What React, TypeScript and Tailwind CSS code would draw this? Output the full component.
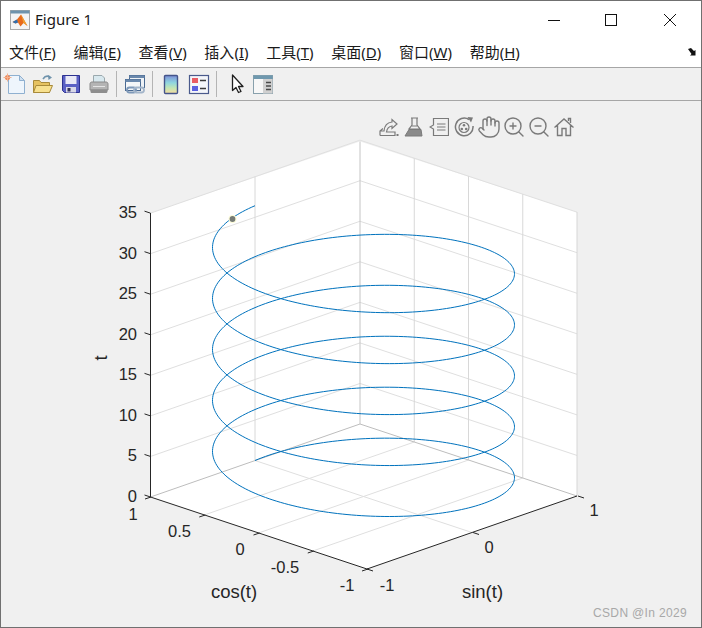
import React from "react";
import { Hand, ZoomIn, ZoomOut } from "lucide-react";

const X = (x: number, y: number) => 363.5 + 105 * x - 108.5 * y;
const Y = (x: number, y: number, z: number) => 496.5 - 36.5 * x - 36 * y - 8.11 * z;

function helix() {
  const pts: string[] = [];
  const end = 10 * Math.PI;
  for (let i = 0; i <= 1000; i++) {
    const t = (end * i) / 1000;
    const a = Math.sin(t);
    const b = Math.cos(t);
    pts.push(`${X(a, b).toFixed(2)},${Y(a, b, t).toFixed(2)}`);
  }
  return "M" + pts.join("L");
}

const zTicks = [0, 5, 10, 15, 20, 25, 30, 35];

const menus: [string, string][] = [
  ["文件", "F"],
  ["编辑", "E"],
  ["查看", "V"],
  ["插入", "I"],
  ["工具", "T"],
  ["桌面", "D"],
  ["窗口", "W"],
  ["帮助", "H"],
];

const Sep = ({ cls }: { cls: string }) => <div className={`w-px h-[26px] bg-[#b4b4b4] ${cls}`} />;

const icon = "w-6 h-6 shrink-0";

function Toolbar() {
  return (
    <div className="h-[32px] bg-[#f0f0f0] flex items-center pl-[2px] shrink-0">
      <svg viewBox="0 0 24 24" className={icon}>
        <path d="M5.5 3.5H16.5L21.5 8.5V21.5H5.5Z" fill="#eef5fc" stroke="#8fb0d0" />
        <path d="M16.5 3.5V8.5H21.5Z" fill="#cfe0f0" stroke="#8fb0d0" />
        <circle cx="4.5" cy="5.5" r="2.6" fill="#ee8a5c" />
        <path d="M4.5 1.5V9.5M0.5 5.5H8.5" stroke="#f3b08e" />
      </svg>
      <svg viewBox="0 0 24 24" className={`${icon} ml-1`}>
        <path d="M2.5 20.5V8.5H8.5L10 10.5H18.5V20.5Z" fill="#e6c260" stroke="#a88a3a" />
        <path d="M2.5 20.5L5 13.5H21.5L18.5 20.5Z" fill="#f7e08e" stroke="#a88a3a" />
        <path d="M12 7C14 4 16.5 3.5 19 5" fill="none" stroke="#6f93ac" strokeWidth="1.6" />
        <path d="M17 3L21 5.5L17.5 8Z" fill="#6f93ac" />
      </svg>
      <svg viewBox="0 0 24 24" className={`${icon} ml-1`}>
        <path d="M3.5 3.5H20.5V20.5H5.5L3.5 18.5Z" fill="#5a60c4" stroke="#2c3190" />
        <rect x="6.5" y="4" width="11" height="8" fill="#e9e9f6" />
        <rect x="7" y="15" width="10" height="5.5" fill="#d8d8e8" />
        <rect x="8.5" y="16" width="3" height="3.5" fill="#33335a" />
      </svg>
      <svg viewBox="0 0 24 24" className={`${icon} ml-1`}>
        <path d="M6.5 3.5H15L17.5 6V11H6.5Z" fill="#d8e8ee" stroke="#9aa8ad" />
        <path d="M3 12C3 10.5 4 10 5 10H19C20.5 10 21 11 21 12V18H3Z" fill="#b4b4b4" stroke="#8a8a8a" />
        <path d="M3.5 17.5H20.5V19.5C20.5 20.5 19.5 21 19 21H5C4 21 3.5 20.5 3.5 19.5Z" fill="#8e8e8e" />
        <path d="M6 14.5H18" stroke="#e4e4e4" />
      </svg>
      <Sep cls="ml-[5px]" />
      <svg viewBox="0 0 24 24" className={`${icon} ml-[6px]`}>
        <rect x="6.5" y="3.5" width="15" height="12" fill="#eef2f6" stroke="#4a6a92" />
        <rect x="6.5" y="3.5" width="15" height="2.5" fill="#6a88ac" />
        <rect x="2.5" y="7.5" width="15" height="11" fill="#f4f6f8" stroke="#4a6a92" />
        <rect x="2.5" y="7.5" width="15" height="2.5" fill="#6a88ac" />
        <rect x="4" y="15.5" width="9" height="5" rx="2.5" fill="none" stroke="#7d98b8" strokeWidth="1.8" />
        <rect x="11" y="15.5" width="10" height="5" rx="2.5" fill="none" stroke="#a3b5ca" strokeWidth="1.8" />
      </svg>
      <Sep cls="ml-[5px]" />
      <svg viewBox="0 0 24 24" className={`${icon} ml-[6px]`}>
        <defs>
          <linearGradient id="cbar" x1="0" y1="0" x2="0" y2="1">
            <stop offset="0" stopColor="#7d8fd8" />
            <stop offset="0.4" stopColor="#8fd6e0" />
            <stop offset="0.7" stopColor="#c4e6b4" />
            <stop offset="1" stopColor="#f6dca0" />
          </linearGradient>
        </defs>
        <rect x="5.5" y="3.5" width="13" height="18" rx="1" fill="url(#cbar)" stroke="#44548a" strokeWidth="1.4" />
      </svg>
      <svg viewBox="0 0 24 24" className={`${icon} ml-1`}>
        <rect x="2.5" y="3.5" width="19" height="18" fill="#f4f6fa" stroke="#4a5a8c" strokeWidth="1.2" />
        <rect x="5" y="6" width="6" height="5" fill="#e85c64" />
        <rect x="5" y="14" width="6" height="5" fill="#5a60e0" />
        <path d="M13 8.5H19M13 16.5H19" stroke="#3a3a3a" strokeWidth="1.4" />
      </svg>
      <Sep cls="ml-[5px]" />
      <svg viewBox="0 0 24 24" className={`${icon} ml-[8px]`}>
        <path d="M7.5 3V18.5L11 15.5L13.5 20.5L16 19.5L13.5 14.5H18Z" fill="#ffffff" stroke="#202020" strokeWidth="1.3" strokeLinejoin="round" />
      </svg>
      <svg viewBox="0 0 24 24" className={`${icon} ml-[2px]`}>
        <rect x="2.5" y="3.5" width="19" height="18" fill="#f7f7f7" stroke="#88a0ac" />
        <rect x="2.5" y="3.5" width="19" height="3.5" fill="#6f98ae" />
        <rect x="12" y="7" width="9.5" height="14.5" fill="#d0d0d0" />
        <path d="M15 10.5H20M15 14H20M15 17.5H20" stroke="#4a4a4a" strokeWidth="1.3" />
      </svg>
    </div>
  );
}

function AxesToolbar() {
  const s = { stroke: "#7a7a7a", strokeWidth: 1.2, fill: "none" };
  const cls = "w-5 h-5 mx-[2px] mt-[2px]";
  return (
    <div className="absolute left-[376px] top-[14px] flex gap-px">
      <svg viewBox="0 0 20 20" className={cls}>
        <path {...s} d="M1 18.5V14L4 11.5M1 18.5H16V15H7.5C8 11.5 10 9.5 13 9V11.5L18 7L13 2.5V5C8.5 5.5 5.5 8.5 5 14H1" />
        <rect x="17.5" y="17" width="2" height="2" fill="#7a7a7a" />
      </svg>
      <svg viewBox="0 0 20 20" className={cls}>
        <path {...s} d="M7 1H14M8 1V8L5 12H16L13 8V1" />
        <path d="M5 12.5H17L18 19H1Z" fill="#8a8a8a" stroke="#7a7a7a" />
        <path d="M8 9H13" stroke="#7a7a7a" />
      </svg>
      <svg viewBox="0 0 20 20" className={cls}>
        <path {...s} d="M4.5 1.5H19.5V18.5H4.5V12L1 10L4.5 8Z" />
        <path {...s} d="M8 7H16.5M8 10H16.5M8 13H16.5" />
      </svg>
      <svg viewBox="0 0 20 20" className={cls}>
        <path {...s} strokeWidth={1.5} d="M15 2.5A8.8 8.8 0 1 0 19 9" />
        <path d="M13.5 0L19 0.5L17 5.5Z" fill="#7a7a7a" />
        <circle {...s} cx="10" cy="10.5" r="5" />
        <circle cx="10" cy="8.3" r="1.3" fill="#7a7a7a" />
        <circle cx="7.8" cy="12" r="1.3" fill="#7a7a7a" />
        <circle cx="12.2" cy="12" r="1.3" fill="#7a7a7a" />
      </svg>
      <Hand size={24} strokeWidth={1.4} color="#7a7a7a" />
      <ZoomIn size={24} strokeWidth={1.4} color="#7a7a7a" />
      <ZoomOut size={24} strokeWidth={1.4} color="#7a7a7a" />
      <svg viewBox="0 0 20 20" className={cls}>
        <path {...s} strokeWidth={1.4} d="M0.5 10.5L10 2L19.5 10.5M3.5 8V18.5H8V11.5H12V18.5H16.5V8M14.5 4V1.5H16.5V6" />
      </svg>
    </div>
  );
}

function Chart() {
  const grid = "#dfdfdf";
  const dark = "#262626";
  const tick = { fill: dark, fontSize: 16.5, fontFamily: "'Liberation Sans', Arial, sans-serif" };
  const label = { ...tick, fontSize: 18.5 };
  const line = (x1: number, y1: number, x2: number, y2: number, c: string, k?: string) => (
    <line key={k ?? `${x1}-${y1}-${x2}-${y2}`} x1={x1} y1={y1} x2={x2} y2={y2} stroke={c} strokeWidth={1} />
  );
  const mid = [0.5, 0, -0.5];
  const zr = (z: number) => 8.11 * z;
  return (
    <svg viewBox="1 101 700 526" className="block w-full h-full">
      <path d="M150.5 213L360 141.5L577 212V496L367 569L150.5 497Z" fill="#ffffff" />
      {zTicks.slice(1).map((z) => (
        <g key={z}>
          {line(150.5, 497 - zr(z), 360, 424 - zr(z), grid)}
          {line(360, 424 - zr(z), 577, 496 - zr(z), grid)}
        </g>
      ))}
      {mid.map((y) => line(X(1, y), Y(1, y, 0), X(1, y), Y(1, y, 35), "#d8d8d8"))}
      {line(X(0, 1), Y(0, 1, 0), X(0, 1), Y(0, 1, 35), "#d8d8d8")}
      {mid.map((y) => line(X(-1, y), Y(-1, y, 0), X(1, y), Y(1, y, 0), grid))}
      {line(X(0, -1), Y(0, -1, 0), X(0, 1), Y(0, 1, 0), grid)}
      {line(360, 141.5, 360, 424, "#c4c4c4")}
      {line(577, 212, 577, 496, "#d6d6d6")}
      {line(150.5, 497, 360, 424, "#bdbdbd")}
      {line(360, 424, 577, 496, "#bdbdbd")}
      <path d={helix()} fill="none" stroke="#0072bd" strokeWidth={1} />
      <circle cx="232.5" cy="219" r="4" fill="#fbfbd8" />
      <circle cx="232.5" cy="219" r="2.9" fill="#757a75" />
      {line(150.5, 213, 150.5, 497, dark)}
      {line(150.5, 497, 367, 569, dark)}
      {line(367, 569, 577, 496, dark)}
      {zTicks.map((z) => line(150.5, 497 - zr(z), 144.5, 495 - zr(z), dark))}
      {[1, 0.5, 0, -0.5, -1].map((y) => line(X(-1, y) + 1, Y(-1, y, 0), X(-1, y) - 5, Y(-1, y, 0) + 2, dark))}
      {[0, 1].map((x) => line(X(x, -1) + 1, Y(x, -1, 0), X(x, -1) + 7, Y(x, -1, 0) + 2, dark))}
      {line(367, 569, 373, 571, dark)}
      {zTicks.map((z) => (
        <text key={z} x={137} y={501.5 - 8.09 * z} textAnchor="end" {...tick}>
          {z}
        </text>
      ))}
      <text x={133} y={520} textAnchor="middle" {...tick}>1</text>
      <text x={179.5} y={537} textAnchor="middle" {...tick}>0.5</text>
      <text x={240} y={555} textAnchor="middle" {...tick}>0</text>
      <text x={285} y={573} textAnchor="middle" {...tick}>-0.5</text>
      <text x={347} y={591} textAnchor="middle" {...tick}>-1</text>
      <text x={387} y={591} textAnchor="middle" {...tick}>-1</text>
      <text x={489} y={553} textAnchor="middle" {...tick}>0</text>
      <text x={594} y={516} textAnchor="middle" {...tick}>1</text>
      <text x={234} y={598} textAnchor="middle" {...label}>cos(t)</text>
      <text x={482.5} y={598} textAnchor="middle" {...label}>sin(t)</text>
      <text x={107} y={358} textAnchor="middle" transform="rotate(-90 107 358)" {...label}>t</text>
      <text x={593} y={617} fill="#a8a8a8" fontSize={12} letterSpacing={0.35} fontFamily="'Liberation Sans', Arial, sans-serif">CSDN @In 2029</text>
    </svg>
  );
}

export default function App() {
  return (
    <div className="w-[702px] h-[628px] flex flex-col bg-[#f0f0f0] border border-[#707070] overflow-hidden font-['Noto_Sans','Noto_Sans_CJK_SC',sans-serif]">
      <div className="h-[37px] bg-white flex items-center shrink-0">
        <svg viewBox="0 0 20 20" className="w-5 h-5 ml-[9px]">
          <rect x="0.5" y="0.5" width="19" height="19" fill="#f4f4f4" stroke="#a9a9a9" />
          <rect x="0.5" y="0.5" width="19" height="3" fill="#6f93ac" />
          <path d="M2.5 12L7 9.5L11 4.5L17.5 16L13.5 13L10.5 16.5L8 12.5L5.5 13.5Z" fill="#e86a1c" />
          <path d="M2.5 12L7 9.5L8 12.5L5.5 13.5Z" fill="#2f6fb0" />
          <path d="M11 4.5L17.5 16L13.5 13L12 8Z" fill="#f0a030" />
        </svg>
        <span className="ml-[5px] text-[15px] leading-none text-[#1a1a1a]">Figure 1</span>
        <div className="ml-auto flex items-center">
          <svg viewBox="0 0 14 14" className="w-[14px] h-[14px] mr-[43px]">
            <path d="M1 7.5H13" stroke="#111" strokeWidth="1" />
          </svg>
          <svg viewBox="0 0 14 14" className="w-[14px] h-[14px] mr-[45px]">
            <rect x="1.5" y="1.5" width="11" height="11" fill="none" stroke="#111" strokeWidth="1" />
          </svg>
          <svg viewBox="0 0 14 14" className="w-[14px] h-[14px] mr-[24px]">
            <path d="M1 1L13 13M13 1L1 13" stroke="#111" strokeWidth="1" />
          </svg>
        </div>
      </div>
      <div className="h-[30px] bg-white flex items-center pl-[8px] gap-[17.7px] text-[15px] text-[#1a1a1a] shrink-0 relative border-b border-[#a6a6a6]">
        {menus.map(([n, k]) => (
          <span key={k} className="whitespace-nowrap">
            {n}(<span className="underline">{k}</span>)
          </span>
        ))}
        <svg viewBox="0 0 10 10" className="absolute right-[4px] top-[9px] w-[10px] h-[10px]">
          <path d="M1 2L4 1L7 4L8.5 3V8.5H3L4.5 7Z" fill="#111" />
        </svg>
      </div>
      <Toolbar />
      <div className="h-px bg-[#a6a6a6] shrink-0" />
      <div className="relative flex-1 min-h-0">
        <Chart />
        <AxesToolbar />
      </div>
    </div>
  );
}
